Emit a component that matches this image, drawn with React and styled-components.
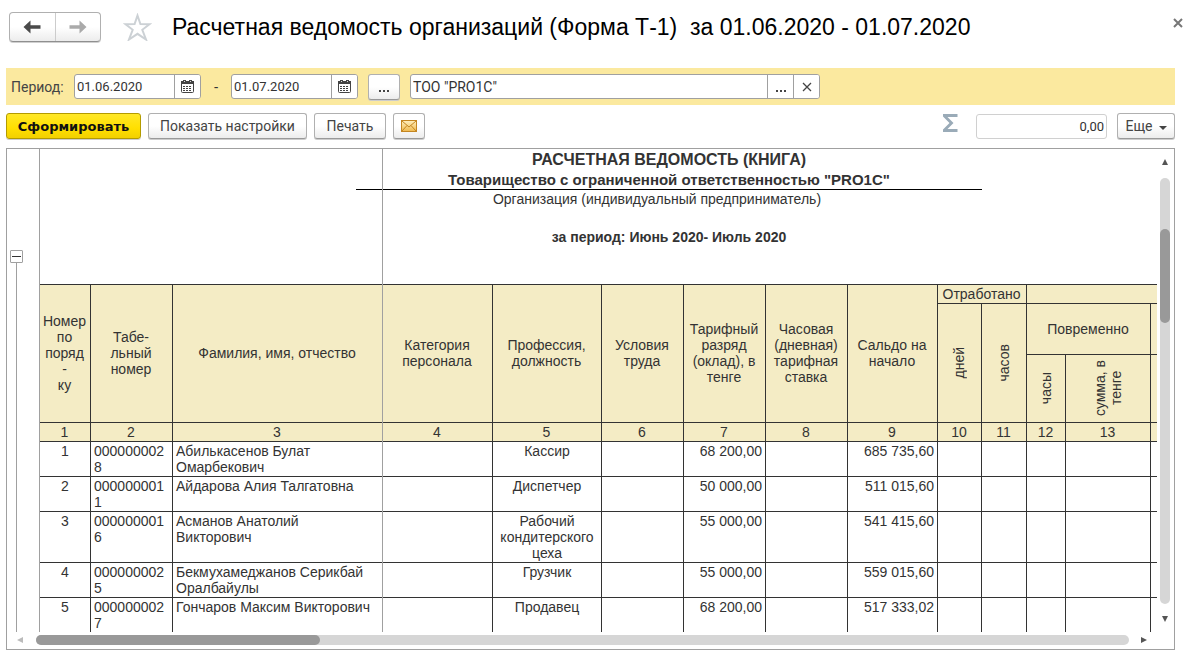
import React from 'react';
import styled, { createGlobalStyle } from 'styled-components';

const GlobalStyle = createGlobalStyle`
	* {
		box-sizing: border-box;
	}

	body {
		margin: 0;
		background: #fff;
		color: #333;
		font-family: 'Liberation Sans', Arial, sans-serif;
		font-size: 14px;
	}

	button, input {
		margin: 0;
		font-family: Roboto, sans-serif;
		color: #444;
	}
`;

const Page = styled.div`
	display: flex;
	flex-direction: column;
	height: 100vh;
	padding-bottom: 8px;
`;

const Header = styled.header`
	display: flex;
	align-items: center;
	height: 68px;
	flex: none;
	padding: 0 12px 14px 9px;
`;

const NavGroup = styled.div`
	display: flex;
	width: 92px;
	height: 30px;
	border: 1px solid #b0b0b0;
	border-bottom-color: #8f8f8f;
	border-radius: 4px;
	background: linear-gradient(#fff 50%, #ececec);
	box-shadow: 0 1px 0 #d0d0d0;
`;

const NavButton = styled.button`
	flex: 1;
	display: flex;
	align-items: center;
	justify-content: center;
	padding: 0;
	border: 0;
	background: none;
	color: ${(p) => (p.disabled ? '#aaa' : '#4a4a4a')};

	& + & {
		border-left: 1px solid #ccc;
	}
`;

const PlainButton = styled.button`
	display: flex;
	padding: 0;
	border: 0;
	background: none;
`;

const StarButton = styled(PlainButton)`
	margin: 0 20px 0 22px;
`;

const CloseButton = styled(PlainButton)`
	align-self: flex-start;
	margin-top: 18px;
`;

const Title = styled.h1`
	flex: 1;
	margin: 0;
	color: #000;
	font-size: 23px;
	line-height: 28px;
	font-weight: 400;
	white-space: pre;
`;

const FilterBar = styled.form`
	display: flex;
	align-items: center;
	flex: none;
	height: 37px;
	margin: 0 20px 0 6px;
	padding-left: 5px;
	background: #fbe99f;
`;

const FilterLabel = styled.label`
	width: 63px;
	font-family: Roboto, sans-serif;
	font-size: 14px;
	color: #444;
`;

const Dash = styled.span`
	width: 30px;
	text-align: center;
`;

const Field = styled.div`
	display: flex;
	flex: 0 1 ${(p) => p.$width}px;
	height: 25px;
	border: 1px solid #a0a0a0;
	border-radius: 3px;
	background: #fff;
	overflow: hidden;
`;

const FieldInput = styled.input`
	flex: 1;
	min-width: 0;
	padding: 0 2px;
	border: 0;
	outline: 0;
	background: none;
	font-size: ${(p) => p.$size || 13}px;
	color: #333;
`;

const FieldButton = styled.button`
	display: flex;
	align-items: center;
	justify-content: center;
	width: 26px;
	padding: 0;
	border: 0;
	border-left: 1px solid #a0a0a0;
	background: #fff;
`;

const Toolbar = styled.div`
	display: flex;
	align-items: center;
	flex: none;
	gap: 7px;
	height: 42px;
	margin: 0 20px 1px 6px;
`;

const Button = styled.button`
	display: flex;
	align-items: center;
	justify-content: center;
	gap: 6px;
	width: ${(p) => p.$width}px;
	height: 26px;
	padding: 0;
	border: 1px solid #b0b0b0;
	border-bottom-color: #999;
	border-radius: 3px;
	background: linear-gradient(#fff 50%, #ececec);
	box-shadow: 0 1px 0 #ccc;
	font-size: 14px;
	white-space: nowrap;
`;

const PrimaryButton = styled(Button)`
	border-color: #b39b00;
	background: linear-gradient(#ffe827, #ffdf00 60%, #f2d000);
	color: #111;
	font-family: 'DejaVu Sans', Verdana, sans-serif;
	font-size: 13px;
	font-weight: 700;
`;

const PeriodButton = styled(Button)`
	margin: 0 10px;
`;

const Total = styled.label`
	display: flex;
	align-items: center;
	gap: 18px;
	margin: 0 3px 0 auto;
`;

const TotalInput = styled.input`
	width: 131px;
	height: 25px;
	padding: 0 2px;
	border: 1px solid #d0d0d0;
	border-radius: 3px;
	font-size: 13px;
	color: #333;
	text-align: right;
`;

const Sheet = styled.main`
	display: grid;
	grid-template-columns: minmax(0, 1fr) 17px;
	grid-template-rows: minmax(0, 1fr) 17px;
	flex: 1;
	min-height: 0;
	margin: 0 20px 0 6px;
	border: 1px solid #a0a0a0;
`;

const Viewport = styled.div`
	display: flex;
	overflow: hidden;
`;

const Outline = styled.div`
	display: flex;
	flex-direction: column;
	flex: none;
	width: 33px;
	padding: 101px 0 0 3px;
	border-right: 1px solid #a0a0a0;
`;

const CollapseButton = styled(PlainButton)`
	align-items: center;
	justify-content: center;
	width: 13px;
	height: 13px;
	flex: none;
	border: 1px solid #a0a0a0;
	border-radius: 1px;
`;

const OutlineLine = styled.div`
	flex: 1;
	width: 7px;
	border-right: 1px solid #a0a0a0;
`;

const Report = styled.div`
	position: relative;
	flex: 1;
	min-width: 0;
	overflow: hidden;
`;

// border of the frozen columns, runs over the whole report
const FreezeLine = styled.div`
	position: absolute;
	top: 0;
	bottom: 0;
	left: 342px;
	width: 1px;
	background: #a0a0a0;
`;

const ReportHead = styled.div`
	width: 626px;
	height: 135px;
	margin-left: 316px;
	text-align: center;
	line-height: 19px;

	h2, p {
		margin: 0;
	}

	h2 {
		font-size: 16px;
		line-height: 21px;
	}
`;

const Company = styled.p`
	height: 20px;
	border-bottom: 1px solid #000;
	font-size: 15px;
	font-weight: 700;
`;

const Caption = styled.p`
	padding-right: 24px;
`;

const Period = styled.p`
	padding-top: 19px;
	font-weight: 700;
`;

const Table = styled.table`
	width: 1195px;
	table-layout: fixed;
	border-collapse: separate;
	border-spacing: 0;
	line-height: 16px;
`;

const HeadCell = styled.th`
	height: ${(p) => p.$height || 'auto'};
	padding: 0 1px 1px 0;
	border-right: 1px solid #333;
	border-bottom: 1px solid #333;
	border-top: ${(p) => (p.$top ? '1px solid #333' : 0)};
	background: #f4ecc5;
	font-weight: 400;
	white-space: pre-line;
`;

const Vertical = styled.span`
	display: inline-block;
	writing-mode: vertical-rl;
	transform: rotate(180deg);
	vertical-align: middle;
`;

const Cell = styled.td`
	height: 35px;
	padding: 1px 3px;
	border-right: 1px solid #333;
	border-bottom: 1px solid #333;
	vertical-align: top;
	text-align: ${(p) => p.$align || 'left'};
	word-break: ${(p) => (p.$breakAll ? 'break-all' : 'normal')};
`;

const NameCell = styled(Cell)`
	padding-right: 8px;
`;

const ScrollBar = styled.div`
	display: flex;
	flex-direction: ${(p) => (p.$vertical ? 'column' : 'row')};
	align-items: center;
	justify-content: space-between;
	padding: ${(p) => (p.$vertical ? '10px 1px 10px 0' : '0 10px 1px 10px')};
`;

const Track = styled.div`
	flex: 1;
	margin: ${(p) => (p.$vertical ? '13px 0 12px' : '0 12px 0 13px')};
	width: ${(p) => (p.$vertical ? '10px' : 'auto')};
	height: ${(p) => (p.$vertical ? 'auto' : '10px')};
	border-radius: 5px;
	background: #d6d6d6;
`;

const Thumb = styled.div`
	position: relative;
	top: ${(p) => (p.$vertical ? '12%' : 0)};
	width: ${(p) => (p.$vertical ? '100%' : '26%')};
	height: ${(p) => (p.$vertical ? '22%' : '100%')};
	border-radius: 5px;
	background: #999;
`;

const columns = [51, 82, 210, 110, 109, 82, 82, 82, 90, 44, 45, 39, 85, 84];

const headings = [
	'Номер\nпо\nпоряд\n-\nку',
	'Табе-\nльный\nномер',
	'Фамилия, имя, отчество',
	'Категория\nперсонала',
	'Профессия,\nдолжность',
	'Условия\nтруда',
	'Тарифный\nразряд\n(оклад), в\nтенге',
	'Часовая\n(дневная)\nтарифная\nставка',
	'Сальдо на\nначало',
];

const employees = [
	{ number: '0000000028', name: 'Абилькасенов Булат Омарбекович', position: 'Кассир', rate: '68 200,00', balance: '685 735,60' },
	{ number: '0000000011', name: 'Айдарова Алия Талгатовна', position: 'Диспетчер', rate: '50 000,00', balance: '511 015,60' },
	{ number: '0000000016', name: 'Асманов Анатолий Викторович', position: 'Рабочий кондитерского цеха', rate: '55 000,00', balance: '541 415,60' },
	{ number: '0000000025', name: 'Бекмухамеджанов Серикбай Оралбайулы', position: 'Грузчик', rate: '55 000,00', balance: '559 015,60' },
	{ number: '0000000027', name: 'Гончаров Максим Викторович', position: 'Продавец', rate: '68 200,00', balance: '517 333,02' },
];

function ArrowIcon({ flip }) {
	return (
		<svg width='18' height='14' viewBox='0 0 18 14' fill='currentColor'>
			<path
				d='M0.5 7 L7.5 0.5 V5.3 H17.5 V8.7 H7.5 V13.5 Z'
				transform={flip ? 'matrix(-1 0 0 1 18 0)' : undefined}
			/>
		</svg>
	);
}

function CalendarIcon() {
	return (
		<svg width='13' height='13' viewBox='0 0 13 13'>
			<rect x='0.5' y='1.5' width='12' height='11' rx='1' fill='#fff' stroke='#444' />
			<path d='M0 1h13v3H0z M2 0h3v3H2z M8 0h3v3H8z' fill='#444' />
			<path d='M3 1h1v1H3z M9 1h1v1H9z' fill='#ddd' />
			<path d='M2 6h2v1H2z M5 6h2v1H5z M8 6h2v1H8z M2 8h2v1H2z M5 8h2v1H5z M8 8h2v1H8z M2 10h2v1H2z M5 10h2v1H5z M8 10h2v1H8z' fill='#444' />
		</svg>
	);
}

function DotsIcon() {
	return (
		<svg width='12' height='11' viewBox='0 0 12 11' fill='#444'>
			<path d='M1 9h2v2H1z M5 9h2v2H5z M9 9h2v2H9z' />
		</svg>
	);
}

function CrossIcon({ size, color, weight }) {
	return (
		<svg width={size} height={size} viewBox='0 0 10 10' stroke={color} strokeWidth={weight}>
			<path d='M1 1 L9 9 M9 1 L1 9' />
		</svg>
	);
}

function StarIcon() {
	return (
		<svg width='29' height='28' viewBox='0 0 29 28' fill='none' stroke='#ccd1d5' strokeWidth='2'>
			<path d='M14.5 2.5 L17.4 11 L26.5 11.2 L19.3 16.8 L23 26.5 L14.5 20.8 L6 26.5 L9.7 16.8 L2.5 11.2 L11.6 11 Z' />
		</svg>
	);
}

function MailIcon() {
	return (
		<svg width='16' height='12' viewBox='0 0 16 12' stroke='#c48622'>
			<defs>
				<linearGradient id='mail' x1='0' y1='0' x2='0' y2='1'>
					<stop offset='0' stopColor='#fff0c0' />
					<stop offset='1' stopColor='#efb94e' />
				</linearGradient>
			</defs>
			<rect x='0.5' y='0.5' width='15' height='11' fill='url(#mail)' />
			<path d='M1 1 L8 7 L15 1 M1 11 L6 5.5 M15 11 L10 5.5' fill='none' />
		</svg>
	);
}

function SigmaIcon() {
	return (
		<svg width='15' height='24' viewBox='0 0 15 24' fill='#9aabb8'>
			<path d='M0 0 H14.5 V3 H4.5 L10.5 9 L4.5 15 H14.5 V18 H0 V15.5 L6.5 9 L0 2.5 Z' />
		</svg>
	);
}

function Triangle({ points, color = '#555' }) {
	return (
		<svg width='6' height='6' viewBox='0 0 6 6' fill={color}>
			<polygon points={points} />
		</svg>
	);
}

function DropIcon() {
	return (
		<svg width='8' height='8' viewBox='0 0 8 8' fill='#444'>
			<polygon points='0,4 8,4 4,8' />
		</svg>
	);
}

function DateField({ id, label, value }) {
	return (
		<Field $width={127}>
			<FieldInput id={id} aria-label={label} defaultValue={value} />
			<FieldButton type='button' aria-label='Календарь'>
				<CalendarIcon />
			</FieldButton>
		</Field>
	);
}

function ReportTable() {
	return (
		<Table>
			<colgroup>
				{columns.map((width, i) => (
					<col key={i} style={{ width }} />
				))}
			</colgroup>
			<thead>
				<tr>
					{headings.map((heading) => (
						<HeadCell key={heading} rowSpan={3} $top>
							{heading}
						</HeadCell>
					))}
					<HeadCell colSpan={2} $top $height='20px'>Отработано</HeadCell>
					<HeadCell colSpan={3} $top />
				</tr>
				<tr>
					<HeadCell rowSpan={2}><Vertical>дней</Vertical></HeadCell>
					<HeadCell rowSpan={2}><Vertical>часов</Vertical></HeadCell>
					<HeadCell colSpan={2} $height='51px'>Повременно</HeadCell>
					<HeadCell />
				</tr>
				<tr>
					<HeadCell $height='68px'><Vertical>часы</Vertical></HeadCell>
					<HeadCell><Vertical>{'сумма, в\nтенге'}</Vertical></HeadCell>
					<HeadCell />
				</tr>
				<tr>
					{columns.map((width, i) => (
						<HeadCell key={i} $height='19px'>{i < 13 ? i + 1 : ''}</HeadCell>
					))}
				</tr>
			</thead>
			<tbody>
				{employees.map((employee, i) => (
					<tr key={employee.number}>
						<Cell $align='center'>{i + 1}</Cell>
						<Cell $breakAll>{employee.number}</Cell>
						<NameCell>{employee.name}</NameCell>
						<Cell />
						<Cell $align='center'>{employee.position}</Cell>
						<Cell />
						<Cell $align='right'>{employee.rate}</Cell>
						<Cell />
						<Cell $align='right'>{employee.balance}</Cell>
						<Cell />
						<Cell />
						<Cell />
						<Cell />
						<Cell />
					</tr>
				))}
			</tbody>
		</Table>
	);
}

function App() {
	return (
		<Page>
			<GlobalStyle />
			<Header>
				<NavGroup>
					<NavButton aria-label='Назад'><ArrowIcon /></NavButton>
					<NavButton aria-label='Вперед' disabled><ArrowIcon flip /></NavButton>
				</NavGroup>
				<StarButton aria-label='В избранное'><StarIcon /></StarButton>
				<Title>{'Расчетная ведомость организаций (Форма Т-1)  за 01.06.2020 - 01.07.2020'}</Title>
				<CloseButton aria-label='Закрыть'>
					<CrossIcon size={10} color='#777' weight={2} />
				</CloseButton>
			</Header>

			<FilterBar>
				<FilterLabel htmlFor='from'>Период:</FilterLabel>
				<DateField id='from' label='Начало периода' value='01.06.2020' />
				<Dash>-</Dash>
				<DateField id='to' label='Конец периода' value='01.07.2020' />
				<PeriodButton type='button' $width={32} aria-label='Выбрать период'>
					<DotsIcon />
				</PeriodButton>
				<Field $width={410}>
					<FieldInput $size={14} aria-label='Организация' defaultValue='ТОО "PRO1C"' />
					<FieldButton type='button' aria-label='Выбрать'><DotsIcon /></FieldButton>
					<FieldButton type='button' aria-label='Очистить'>
						<CrossIcon size={10} color='#444' weight={1.3} />
					</FieldButton>
				</Field>
			</FilterBar>

			<Toolbar>
				<PrimaryButton $width={135}>Сформировать</PrimaryButton>
				<Button $width={159}>Показать настройки</Button>
				<Button $width={72}>Печать</Button>
				<Button $width={32} aria-label='Отправить по почте'><MailIcon /></Button>
				<Total>
					<SigmaIcon />
					<TotalInput aria-label='Сумма' defaultValue='0,00' />
				</Total>
				<Button $width={58}>
					Еще
					<DropIcon />
				</Button>
			</Toolbar>

			<Sheet>
				<Viewport>
					<Outline>
						<CollapseButton aria-label='Свернуть'>
							<svg width='9' height='1'><rect width='9' height='1' fill='#333' /></svg>
						</CollapseButton>
						<OutlineLine />
					</Outline>
					<Report>
						<ReportHead>
							<h2>РАСЧЕТНАЯ ВЕДОМОСТЬ (КНИГА)</h2>
							<Company>Товарищество с ограниченной ответственностью "PRO1C"</Company>
							<Caption>Организация (индивидуальный предприниматель)</Caption>
							<Period>за период: Июнь 2020- Июль 2020</Period>
						</ReportHead>
						<ReportTable />
						<FreezeLine />
					</Report>
				</Viewport>
				<ScrollBar $vertical>
					<Triangle points='3,0 6,6 0,6' />
					<Track $vertical><Thumb $vertical /></Track>
					<Triangle points='0,0 6,0 3,6' />
				</ScrollBar>
				<ScrollBar>
					<Triangle points='0,3 6,0 6,6' color='#bbb' />
					<Track><Thumb /></Track>
					<Triangle points='0,0 6,3 0,6' />
				</ScrollBar>
			</Sheet>
		</Page>
	);
}

export default App;
